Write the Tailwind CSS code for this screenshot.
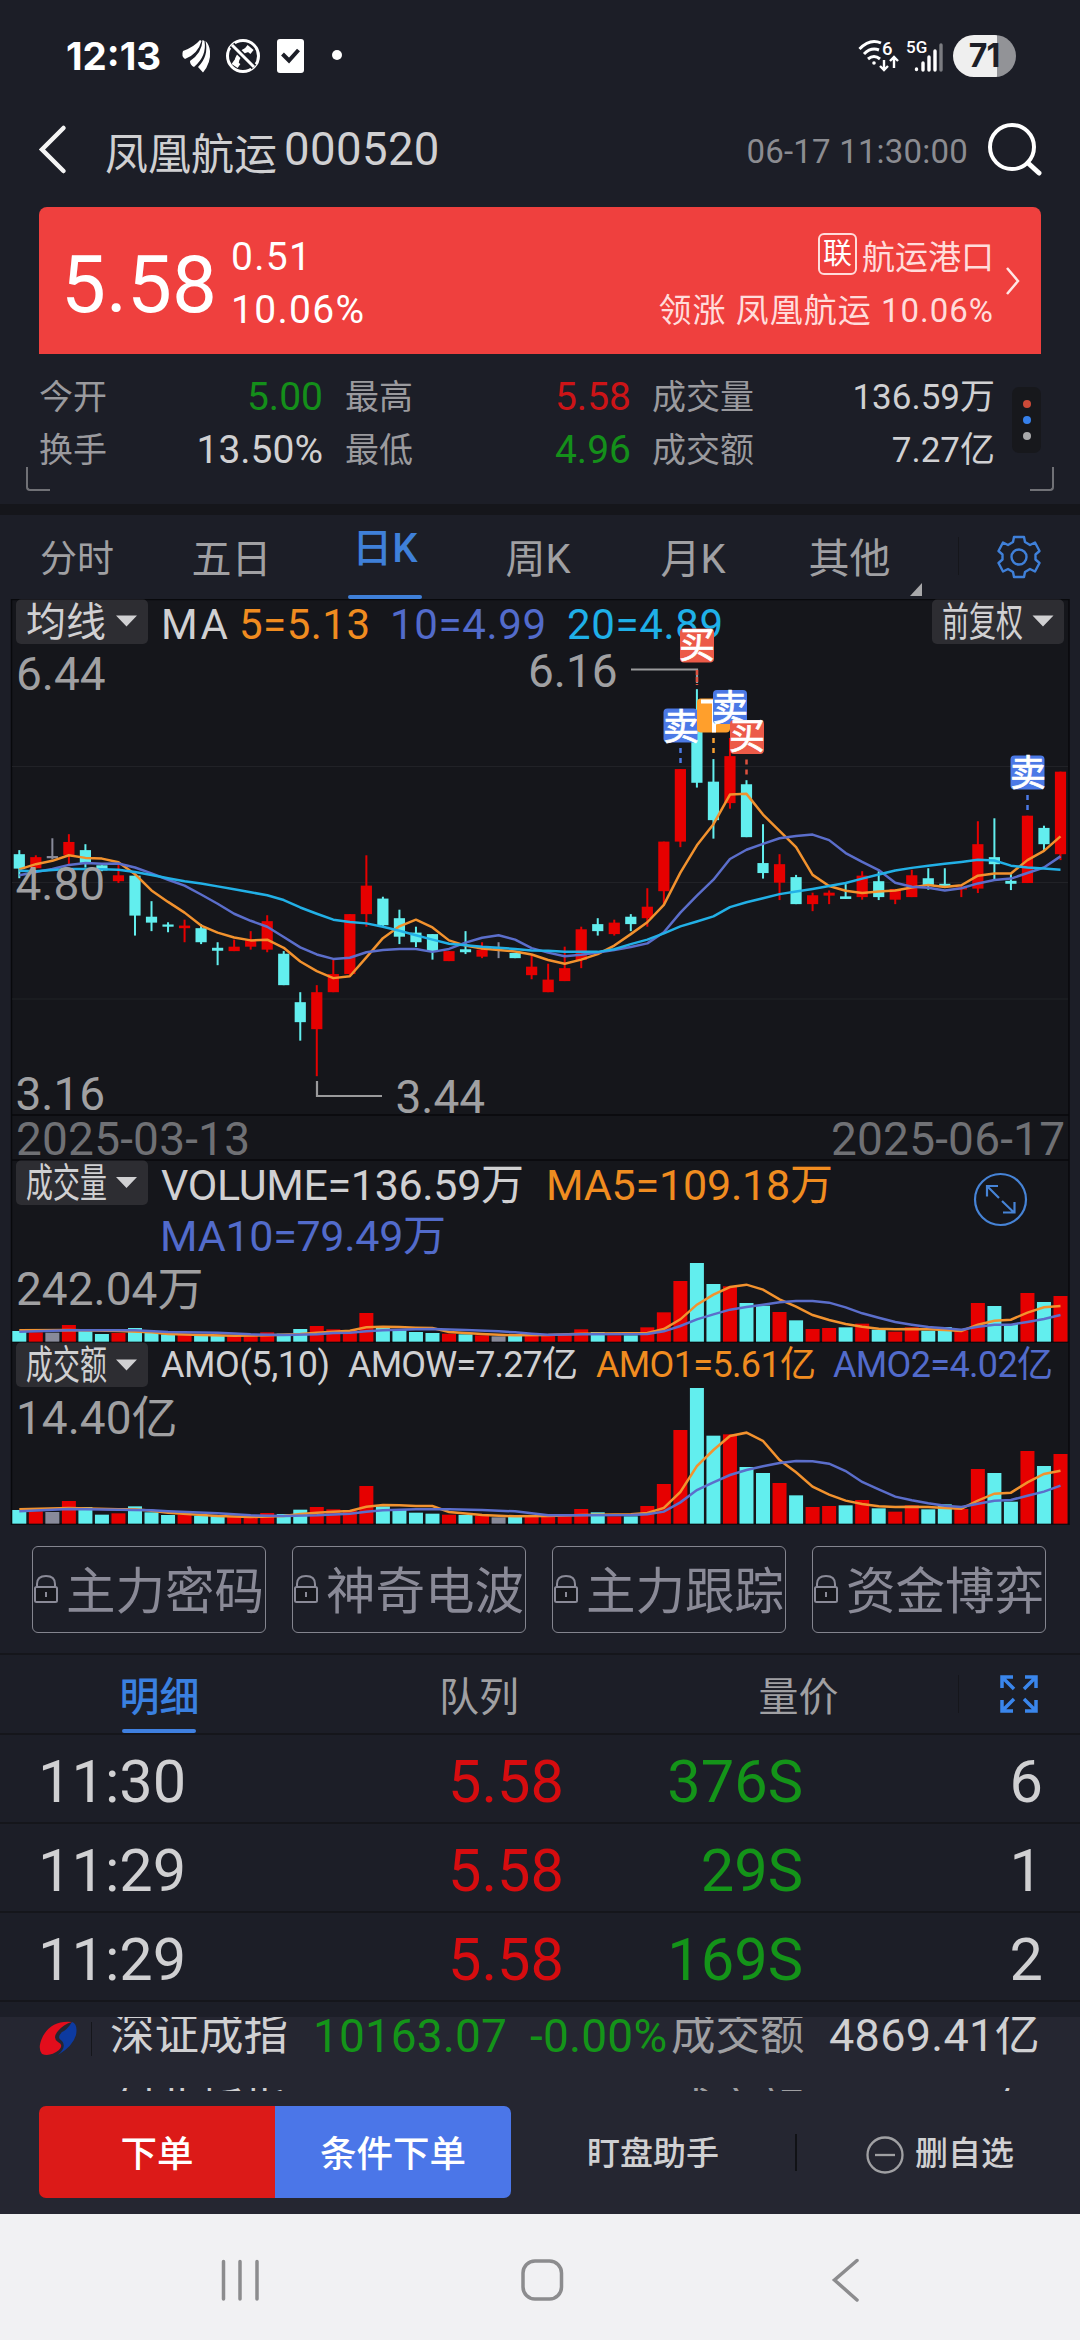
<!DOCTYPE html>
<html lang="zh-CN">

<head>
    <meta charset="UTF-8">
    <meta name="viewport" content="width=device-width, initial-scale=1.0">
    <script src="https://cdn.jsdelivr.net/npm/@tailwindcss/browser@4"></script>
    <title>凤凰航运 000520</title>
</head>

<body class="w-[1080px] h-[2340px] overflow-hidden bg-[#1c1e27] text-[#d0d0d2] font-['Roboto','Noto_Sans_CJK_SC',sans-serif] whitespace-nowrap">

    <!-- Status bar -->
    <div class="h-[110px] flex items-center pt-[2px] pl-[66px] pr-[64px] text-white">
        <span class="w-[115px] text-[38.5px] font-bold leading-none font-['Inter',sans-serif]">12:13</span>
        <svg class="w-[30px] h-[34px] shrink-0" viewBox="0 0 30 34" fill="#fff">
            <path d="M19 1 Q13 8 2 12 Q0 17 4 20 Q17 15 20.500 2 Z" />
            <path d="M21.500 1 Q21 14 9 22 Q9 26 13 28 Q26 17 23.500 2 Z" />
            <path d="M24.500 2 Q28 17 17 28 L22 33.500 Q30 24 29 12 Q28 5 24.500 2 Z" />
        </svg>
        <svg class="w-[36px] h-[36px] ml-[14px] shrink-0" viewBox="0 0 36 36" fill="none" stroke="#fff" stroke-width="3">
            <circle cx="18" cy="18" r="15.500" />
            <path d="M11 27 Q12 14 25 11" stroke-width="4.500" />
            <path d="M8 24 L14 28 M21 9 L27 14" stroke-width="5" />
            <path d="M7 7 L29 29" stroke="#1c1e27" stroke-width="6.500" />
            <path d="M7 7 L29 29" />
        </svg>
        <svg class="w-[27px] h-[34px] ml-[16px] shrink-0" viewBox="0 0 27 34">
            <rect width="27" height="34" rx="3" fill="#fff" />
            <path d="M5.500 15 L12 21.500 L21.500 11" fill="none" stroke="#1c1e27" stroke-width="4" />
        </svg>
        <span class="w-[10px] h-[10px] ml-[28px] mt-[-2px] rounded-full bg-white"></span>
        <svg class="w-[86px] h-[36px] mt-[-2px] ml-auto shrink-0" viewBox="0 -2 86 36" fill="none" stroke="#fff" stroke-width="3">
            <path d="M1.500 10 Q12 -1 23 4" />
            <path d="M6 15 Q13 8 21 11" />
            <path d="M10 20 Q16 15 22 20" />
            <circle cx="16" cy="24" r="1.800" fill="#fff" stroke="none" />
            <path d="M26 21 V30 M22 27 L26 31 L30 27 M36 29 V19 M32 22 L36 18 L40 22" stroke-width="2.400" />
            <text x="24" y="15.500" font-size="18.500" font-weight="500" fill="#fff" stroke="none">6</text>
            <text x="48" y="13.500" font-size="17" font-weight="500" fill="#fff" stroke="none">5G</text>
            <path d="M58.500 30.500 V30 M65 31 V24 M71 31 V18 M77 31 V12" stroke-width="3.400" stroke-linecap="round" />
            <path d="M83 31 V6" stroke="#7b7c81" stroke-width="3.400" stroke-linecap="round" />
        </svg>
        <div class="w-[63px] h-[42px] ml-[9px] rounded-full overflow-hidden flex items-center justify-center bg-[linear-gradient(90deg,#efefef_70%,#929397_70%)] text-[#1c1e27] text-[32px] font-bold leading-none font-['Inter',sans-serif] pr-[1px] tracking-[-1px]">71</div>
    </div>

    <!-- Title -->
    <header class="h-[97px] flex items-start pl-[38px] pr-[38px]">
        <svg class="w-[30px] h-[52px] mt-[14px] shrink-0" viewBox="0 0 30 52" fill="none" stroke="#f4f4f4" stroke-width="4.500" stroke-linecap="round">
            <path d="M25.500 4 L4 25.500 L25.500 47" />
        </svg>
        <span class="ml-[37px] mt-[23px] text-[43px] leading-[44px]">凤凰航运</span>
        <span class="ml-[7px] mt-[18px] text-[45.5px] leading-[44px] tracking-[0.4px]">000520</span>
        <span class="ml-auto mr-[20px] mt-[20px] text-[33px] leading-[44px] tracking-[0.2px] text-[#8b8c91]">06-17 11:30:00</span>
        <svg class="w-[54px] h-[56px] mt-[12px] shrink-0" viewBox="0 0 54 56" fill="none" stroke="#fff" stroke-width="4" stroke-linecap="round">
            <circle cx="24" cy="25" r="22" />
            <path d="M40 41 L51 51" stroke-width="5" />
        </svg>
    </header>

    <!-- Price card -->
    <section class="mx-[39px] h-[147px] rounded-t-[8px] bg-[#ef403e] text-white flex items-center">
        <span class="ml-[22px] mt-[8px] w-[170px] text-[80px] leading-none">5.58</span>
        <div class="mt-[6px] text-[39px] leading-[53px]">
            <p class="tracking-[1.3px]">0.51</p>
            <p class="tracking-[1.3px]">10.06%</p>
        </div>
        <div class="ml-auto mt-[6px] text-right text-[33px] leading-[53px] text-[#ffdcdb]">
            <p class="flex items-center justify-end gap-[5px]"><span class="w-[39px] h-[42px] mt-[-6px] rounded-[6px] border-2 border-[#ffdcdb] text-[29px] leading-[38px] text-center text-white flex justify-center">联</span><span>航运港口</span></p>
            <p class="tracking-[1px]">领涨 凤凰航运 10.06%</p>
        </div>
        <svg class="w-[16px] h-[30px] ml-[11px] mr-[20px] shrink-0" viewBox="0 0 16 30" fill="none" stroke="#ffe6e5" stroke-width="2.500">
            <path d="M2 2 L13 15 L2 28" />
        </svg>
    </section>

    <!-- Quote summary -->
    <section class="relative h-[150px] pt-[17px] pl-[39px]">
        <div class="grid grid-cols-[120px_164px_120px_188px_150px_214px] items-center leading-[53px] text-[34px] text-[#9a9a9e]">
            <span>今开</span><span class="text-right text-[39px] text-[#148f1a]">5.00</span>
            <span class="pl-[22px]">最高</span><span class="text-right text-[39px] text-[#cc1417]">5.58</span>
            <span class="pl-[21px]">成交量</span><span class="text-right text-[35px] text-[#d0d0d2]">136.59万</span>
            <span>换手</span><span class="text-right text-[39px] text-[#d0d0d2]">13.50%</span>
            <span class="pl-[22px]">最低</span><span class="text-right text-[39px] text-[#148f1a]">4.96</span>
            <span class="pl-[21px]">成交额</span><span class="text-right text-[35px] text-[#d0d0d2]">7.27亿</span>
        </div>
        <div class="absolute left-[1012px] top-[33px] w-[29px] h-[66px] rounded-[7px] bg-[#17181c] flex flex-col items-center justify-center gap-[8px]">
            <span class="w-[8px] h-[8px] rounded-full bg-[#cc4a38]"></span>
            <span class="w-[8px] h-[8px] rounded-full bg-[#3680ea]"></span>
            <span class="w-[8px] h-[8px] rounded-full bg-[#a9a9ab]"></span>
        </div>
        <span class="absolute left-[26px] bottom-[13px] w-[24px] h-[24px] border-l-2 border-b-2 border-[#707176] rounded-bl-[4px]"></span>
        <span class="absolute right-[26px] bottom-[13px] w-[24px] h-[24px] border-r-2 border-b-2 border-[#707176] rounded-br-[4px]"></span>
    </section>

    <!-- Period tabs -->
    <nav class="relative h-[95px] border-t-[11px] border-[#15161b] text-[#a0a0a3]">
        <div class="grid grid-cols-[154px_155px_152px_154px_156px_157px_30px_122px] grid-rows-[84px] h-[84px] leading-[89px] text-center text-[40px]">
            <span class="text-[37px]">分时</span>
            <span>五日</span>
            <span class="relative text-[#3f80d9] font-medium leading-[68px]">日K<i class="absolute left-[39px] bottom-0 w-[74px] h-[4px] rounded-full bg-[#3f80d9]"></i></span>
            <span>周K</span>
            <span>月K</span>
            <span class="text-[41px]">其他</span>
            <span></span>
            <span class="relative flex justify-center items-center">
                <i class="absolute left-0 top-[22px] w-px h-[38px] bg-[#15161b]"></i>
                <svg class="w-[44px] h-[44px]" viewBox="-22 -22 44 44" fill="none" stroke="#3f80d9" stroke-width="2.400" stroke-linejoin="round">
                    <path d="M-5 -20 H5 L6 -15 L11 -12 L16 -14.500 L20.500 -6 L16.500 -2.500 V2.500 L20.500 6 L16 14.500 L11 12 L6 15 L5 20 H-5 L-6 15 L-11 12 L-16 14.500 L-20.500 6 L-16.500 2.500 V-2.500 L-20.500 -6 L-16 -14.500 L-11 -12 L-6 -15 Z" />
                    <circle r="7.500" />
                </svg>
            </span>
        </div>
        <svg class="absolute left-[910px] bottom-[3px] w-[12px] h-[13px]" viewBox="0 0 12 13"><path d="M0 13 L12 0 V13 Z" fill="#a8a8aa" /></svg>
    </nav>

    <!-- Charts -->
    <svg class="block w-[1080px] h-[926px]" viewBox="0 599 1080 926" fill="none">
        <rect x="11.500" y="599" width="1057.500" height="925" fill="#15161b" />
        <path d="M11.500 599.500 H1069 M11.500 1115 H1069 M11.500 1160 H1069 M11.500 1342 H1069 M11.500 1524 H1069 M11.500 599 V1525 M1069 599 V1525" stroke="#08090c" stroke-width="1.500" />
        <path d="M12 766.500 H1068 M12 882.500 H1068 M12 999 H1068" stroke="#212227" stroke-width="1.200" />

        <!-- indicator legends -->
        <g font-size="42">
            <text x="161" y="638.500" fill="#d0d0d2" textLength="67">MA</text>
            <text x="239" y="638.500" fill="#f08c20" textLength="131">5=5.13</text>
            <text x="390" y="638.500" fill="#526bcb" textLength="156">10=4.99</text>
            <text x="567" y="638.500" fill="#1fb0e8" textLength="156">20=4.89</text>
        </g>
        <g id="candles"></g>
        <g id="kLines" stroke-width="2.500" stroke-linejoin="round"></g>
        <g font-size="46" fill="#a0a0a2">
            <text x="16" y="689.500">6.44</text>
            <text x="15.500" y="899.500">4.80</text>
            <text x="15.500" y="1110">3.16</text>
            <text x="528" y="687">6.16</text>
            <text x="395.500" y="1113">3.44</text>
            <text x="16" y="1305">242.04万</text>
            <text x="16" y="1434">14.40亿</text>
            <text x="16" y="1154.500" fill="#6f7074" textLength="234">2025-03-13</text>
            <text x="831" y="1154.500" fill="#6f7074" textLength="234">2025-06-17</text>
        </g>
        <path d="M631 669.500 H697 V683 M317 1081 V1096 H382" stroke="#9a9a9c" stroke-width="2.200" />

        <g font-size="43">
            <text x="161" y="1200" fill="#d0d0d2" textLength="363">VOLUME=136.59万</text>
            <text x="546" y="1200" fill="#f08c20" textLength="287">MA5=109.18万</text>
            <text x="160" y="1251" fill="#526bcb" textLength="286">MA10=79.49万</text>
        </g>
        <g font-size="36">
            <text x="161" y="1377" fill="#d0d0d2" textLength="169">AMO(5,10)</text>
            <text x="348" y="1377" fill="#d0d0d2" textLength="230">AMOW=7.27亿</text>
            <text x="596" y="1377" fill="#f08c20" textLength="220">AMO1=5.61亿</text>
            <text x="833" y="1377" fill="#526bcb" textLength="220">AMO2=4.02亿</text>
        </g>

        <!-- dropdown chips -->
        <g fill="#2d2d32">
            <rect x="16" y="599.500" width="132" height="44.500" rx="5" />
            <rect x="932" y="599.500" width="132" height="44.500" rx="5" />
            <rect x="16" y="1160.500" width="132" height="44.500" rx="5" />
            <rect x="16" y="1342.500" width="132" height="44.500" rx="5" />
        </g>
        <g font-size="40" fill="#d0d0d2">
            <text x="26" y="636">均线</text>
            <text x="942" y="636" textLength="81" lengthAdjust="spacingAndGlyphs">前复权</text>
            <text x="26" y="1197" textLength="81" lengthAdjust="spacingAndGlyphs">成交量</text>
            <text x="26" y="1379" textLength="81" lengthAdjust="spacingAndGlyphs">成交额</text>
            <path d="M116 615.500 H137 L126.500 626.500 Z M1032.500 615.500 H1053.500 L1043 626.500 Z M116 1177 H137 L126.500 1188 Z M116 1359.500 H137 L126.500 1370.500 Z" />
        </g>

        <!-- trade marks -->
        <g font-size="36" fill="#fff" text-anchor="middle" stroke-width="2.500">
            <path d="M697 670 V685" stroke="#e0523f" stroke-dasharray="5 2" />
            <path d="M680.500 748 V764" stroke="#4b79e6" stroke-dasharray="5 5" />
            <path d="M713.500 738 V754" stroke="#f9a030" stroke-dasharray="5 5" />
            <path d="M746.500 759.500 V776" stroke="#e0523f" stroke-dasharray="5 5" />
            <path d="M1027.500 795 V812" stroke="#4b79e6" stroke-dasharray="5 5" />
            <rect x="680" y="628.500" width="34" height="34" rx="4" fill="#ec5a48" />
            <text x="697" y="657.500" stroke="#fff" stroke-width="0.700">买</text>
            <rect x="663.500" y="708.500" width="34" height="34" rx="4" fill="#4b79e6" />
            <text x="681" y="740" stroke="#fff" stroke-width="0.700">卖</text>
            <rect x="697" y="698.500" width="33" height="34" rx="4" fill="#ff9f2c" />
            <path d="M701 701.500 H727 M714 701 V732.500" stroke="#fff" stroke-width="4" />
            <rect x="713" y="690" width="34" height="34" rx="4" fill="#4b79e6" />
            <text x="730" y="721" stroke="#fff" stroke-width="0.700">卖</text>
            <rect x="730" y="720" width="34" height="34" rx="4" fill="#ec5a48" />
            <text x="747" y="748.500" stroke="#fff" stroke-width="0.700">买</text>
            <rect x="1010.500" y="755.500" width="34" height="34" rx="4" fill="#4b79e6" />
            <text x="1028" y="786" stroke="#fff" stroke-width="0.700">卖</text>
        </g>

        <g id="volume" stroke-width="2.500"></g>
        <g id="amount" stroke-width="2.500"></g>

        <!-- expand button -->
        <g stroke="#4683d6" stroke-width="2.200">
            <circle cx="1000.500" cy="1199.500" r="25.500" />
            <path d="M999 1198 L987 1186 M987 1196.500 V1186 H998 M1002 1201 L1014 1212.500 M1014.500 1202 V1212.500 H1003" />
        </g>
    </svg>

    <!-- Locked indicators -->
    <section id="locked" class="h-[130px] pt-[21px] pl-[32px] grid grid-cols-[234px_234px_234px_234px] gap-[26px] items-start border-b-2 border-[#15161b]"></section>

    <!-- Detail tabs -->
    <nav class="h-[80px] border-b-2 border-[#15161b] grid grid-cols-[319px_320px_319px_122px] grid-rows-[78px] text-center text-[40px] leading-[85px] text-[#a0a0a3]">
        <span class="relative text-[#3a80e0] font-medium">明细<i class="absolute left-[122px] bottom-0 w-[74px] h-[4px] rounded-full bg-[#3f80e0]"></i></span>
        <span>队列</span>
        <span>量价</span>
        <span class="relative flex justify-center items-center">
            <i class="absolute left-0 top-[20px] w-px h-[38px] bg-[#15161b]"></i>
            <svg class="w-[38px] h-[38px]" viewBox="0 0 38 38" fill="none" stroke="#3a86ec" stroke-width="3.500">
                <path d="M2 13 V2 H13 M2 2 L14 14 M25 2 H36 V13 M36 2 L24 14 M2 25 V36 H13 M2 36 L14 24 M36 25 V36 H25 M36 36 L24 24" />
            </svg>
        </span>
    </nav>

    <!-- Tick list -->
    <section id="ticks" class="h-[282px]"></section>

    <!-- Index ticker -->
    <section class="h-[74px] overflow-hidden bg-[#252631] text-[45px]">
        <div class="h-[74px] flex items-start leading-[66px] pl-[38px]">
            <svg class="w-[40px] h-[36px] mt-[4px] shrink-0" viewBox="0 0 40 36">
                <path d="M34 1 Q14 -1 5 15 Q-1 27 4 33 Q12 36 21 29 Q26 24 20 21 Q14 17 20 10 Q26 3 34 1 Z" fill="#e30d1c" />
                <path d="M34 1 Q40 3 38 14 Q35 25 20 34 Q29 26 24 20 Q18 17 24 11 Q29 9 34 1 Z" fill="#0d3aa0" />
            </svg>
            <span class="ml-[13px] mt-[5px] w-px h-[34px] bg-[#15161b]"></span>
            <span class="ml-[18px] mt-[-15px] text-[44.5px] w-[203px]">深证成指</span>
            <span class="mt-[-14px] w-[217px] text-[#149419] text-[46px] tracking-[0.1px]">10163.07</span>
            <span class="mt-[-14px] w-[141px] text-[#149419] text-[46px] tracking-[0.2px]">-0.00%</span>
            <span class="mt-[-15px] w-[158px] text-[#a0a0a3] text-[44.500px]">成交额</span>
            <span class="mt-[-14px] tracking-[0.3px]">4869.41亿</span>
        </div>
    </section>
    <!-- next row, just coming into view -->
    <section class="h-[3px] mt-[-3px] overflow-hidden bg-[#252631] flex items-start leading-[66px] text-[44.500px]">
        <span class="ml-[110px] mt-[-11px] w-[560px]">创业板指</span>
        <span class="mt-[-11px] w-[324px] text-[#a0a0a3]">成交额</span>
        <span class="mt-[-11px]">亿</span>
    </section>

    <!-- Order bar -->
    <footer class="h-[123px] bg-[#252631] flex items-start pt-[15px] pl-[39px] text-[33px] leading-[96px] font-medium">
        <button class="w-[236px] h-[92px] rounded-l-[7px] bg-[#dc1a18] text-white text-[36.5px] leading-[92px] pt-[3px]">下单</button>
        <button class="w-[236px] h-[92px] rounded-r-[7px] bg-[#4b76e8] text-white text-[36.5px] leading-[92px] pt-[3px]">条件下单</button>
        <span class="w-[284px] text-center">盯盘助手</span>
        <i class="mt-[28px] w-[2px] h-[37px] bg-[#111216]"></i>
        <svg class="w-[38px] h-[38px] mt-[30px] ml-[69px] shrink-0" viewBox="0 0 38 38" fill="none" stroke="#a0a0a3" stroke-width="2.300">
            <circle cx="19" cy="19" r="17.500" />
            <path d="M9 19 H29" />
        </svg>
        <span class="ml-[11px]">删自选</span>
    </footer>

    <!-- System navigation -->
    <div class="h-[126px] bg-[#f1f1f3] pt-[44px]">
        <svg class="block w-[1080px] h-[44px]" viewBox="0 2258 1080 44" fill="none" stroke="#8c8c8e" stroke-width="3.500" stroke-linecap="round">
            <path d="M223.500 2261.500 V2299 M240 2261.500 V2299 M257 2261.500 V2299" />
            <rect x="523" y="2261" width="38.500" height="38" rx="12" />
            <path d="M857 2260.500 L834.500 2280 L857 2300" />
        </svg>
    </div>

    <script>
        const RED = "#e60000", CYAN = "#62eeee", GREY = "#888a9a";
        const STEP = 16.527;
        const cx = i => 19.3 + i * STEP;
        const kY = v => 590 + v * 0.37;
        const vY = v => 1150 + v / 3;

        // colour, high, body top, body bottom, low
        const candles = `c 703 714 753 779|r 717 722 752 752|g 671 719 725 728|r 660 681 716 742|c 687 703 738 750|c 744 744 758 760|r 738 771 787 792|c 772 772 880 934|c 841 883 899 922|c 898 904 910 925|r 891 907 914 952|c 903 914 952 957|c 952 967 975 1014|r 945 964 976 976|r 922 947 964 972|r 879 895 972 979|c 976 983 1068 1068|c 1087 1114 1168 1218|r 1068 1087 1187 1314|r 1000 1038 1087 1087|r 876 876 1038 1044|r 717 799 876 910|c 829 834 906 908|c 864 887 937 957|c 910 926 952 965|c 930 930 976 999|r 976 976 1003 1003|c 922 971 979 984|r 952 972 991 995|g 952 965 969 995|c 981 981 995 995|r 985 1018 1041 1052|r 1010 1053 1087 1087|r 964 1022 1057 1057|r 910 917 1000 1022|c 887 903 922 934|r 891 899 930 934|c 876 883 903 922|r 806 856 887 910|r 680 680 814 850|r 484 484 680 695|c 268 380 521 534|c 457 518 622 672|r 400 449 576 591|c 514 525 668 668|c 633 738 765 780|r 714 741 791 838|c 770 776 849 849|r 818 825 849 868|r 812 818 826 849|c 795 828 835 835|r 760 772 830 837|c 760 787 830 838|r 808 808 837 849|r 756 771 830 830|c 752 779 797 810|c 752 794 800 800|r 800 804 808 830|r 625 687 807 819|c 617 722 741 783|c 768 786 794 811|r 610 610 792 792|c 637 643 687 705|r 491 491 714 730`
            .split("|").map(s => s.split(" "));

        const ma5 = [755, 741, 732, 717, 724, 726, 736, 768, 812, 843, 872, 907, 926, 939, 947, 945, 967, 1004, 1030, 1049, 1044, 993, 941, 909, 891, 912, 947, 961, 969, 973, 977, 985, 1000, 1010, 999, 984, 961, 930, 898, 851, 764, 690, 633, 553, 551, 607, 651, 695, 770, 800, 813, 819, 815, 812, 804, 797, 803, 798, 772, 766, 766, 730, 705, 666];
        const ma10 = [771, 762, 754, 743, 738, 740, 739, 750, 766, 783, 799, 823, 848, 875, 894, 910, 938, 966, 985, 997, 994, 979, 973, 970, 970, 978, 970, 953, 940, 933, 945, 968, 980, 990, 986, 980, 973, 965, 955, 925, 872, 826, 783, 727, 702, 686, 671, 665, 661, 676, 711, 735, 757, 791, 802, 805, 812, 806, 793, 784, 780, 765, 750, 720];
        const ma20 = [759, 760, 757, 754, 754, 755, 756, 762, 770, 779, 787, 793, 801, 809, 817, 825, 838, 858, 875, 891, 897, 901, 910, 921, 933, 945, 956, 960, 964, 967, 970, 974, 975, 978, 978, 978, 971, 957, 945, 928, 909, 896, 882, 857, 844, 833, 822, 815, 808, 800, 792, 780, 769, 758, 751, 745, 740, 735, 729, 731, 745, 750, 753, 756];

        const vol = [543, 547, 548, 525, 541, 552, 549, 534, 549, 553, 551, 555, 556, 557, 556, 547, 551, 537, 528, 538, 540, 489, 534, 541, 546, 549, 551, 553, 556, 559, 557, 556, 557, 556, 538, 546, 556, 556, 532, 487, 393, 339, 402, 409, 459, 467, 486, 511, 537, 534, 532, 521, 539, 545, 532, 542, 531, 541, 459, 468, 522, 429, 456, 438];
        const amo = [1080, 1084, 1086, 1053, 1071, 1094, 1090, 1069, 1087, 1095, 1094, 1097, 1098, 1100, 1099, 1089, 1092, 1079, 1071, 1078, 1082, 1008, 1069, 1080, 1088, 1091, 1094, 1095, 1098, 1102, 1100, 1099, 1100, 1099, 1077, 1087, 1099, 1099, 1068, 1002, 840, 714, 857, 853, 951, 969, 999, 1036, 1071, 1068, 1066, 1050, 1075, 1085, 1066, 1078, 1063, 1077, 957, 969, 1055, 903, 948, 912];

        // index value pairs
        const vol5 = "0 541,3 540,6 543,8 547,9 552,11 555,13 557,15 556,16 554,17 552,18 548,19 545,20 542,21 532,22 530,23 531,24 533,25 534,26 546,27 549,28 552,30 556,32 555,34 551,38 549,39 537,40 508,41 464,42 434,43 411,44 404,45 419,46 448,47 470,48 495,49 510,50 522,51 530,52 536,53 538,54 537,55 538,56 540,57 543,58 524,59 512,60 509,61 488,62 472,63 468";
        const vol10 = "0 545,3 541,7 541,9 546,12 548,14 553,16 555,18 553,19 549,20 548,21 544,22 541,23 539,24 538,25 537,27 540,29 544,30 547,31 551,32 554,34 553,38 552,39 544,40 528,41 508,42 493,43 479,44 471,45 464,46 457,47 453,48 453,49 458,50 472,51 490,52 503,53 516,54 524,55 531,56 535,57 539,58 530,59 524,60 524,61 516,62 507,63 495";
        const amo5 = "0 1078,3 1074,6 1078,7 1078,8 1082,9 1088,12 1098,14 1101,16 1098,17 1092,18 1088,19 1085,20 1083,21 1070,22 1065,23 1066,24 1068,25 1068,26 1086,28 1095,30 1099,32 1098,34 1095,37 1093,38 1089,39 1074,40 1026,41 948,42 900,43 858,44 848,45 873,46 930,47 967,48 1010,49 1034,50 1052,51 1062,52 1069,53 1071,54 1070,55 1071,56 1074,57 1076,58 1052,59 1031,60 1028,61 997,62 972,63 962";
        const amo10 = "0 1084,3 1077,6 1079,8 1081,9 1084,12 1090,14 1096,16 1098,18 1096,20 1091,21 1085,22 1081,24 1078,26 1078,28 1080,30 1084,31 1090,32 1096,34 1096,37 1095,38 1093,39 1085,40 1057,41 1020,42 997,43 975,44 960,45 949,46 939,47 933,48 934,49 941,50 963,51 996,52 1018,53 1040,54 1051,55 1060,56 1067,57 1071,58 1061,59 1052,60 1050,61 1037,62 1025,63 1007";

        const colorOf = c => c === "r" ? RED : c === "c" ? CYAN : GREY;

        document.getElementById("candles").innerHTML = candles.map(([c, hi, top, bot, lo], i) => {
            const x = cx(i), f = colorOf(c);
            return `<rect x="${x - 1}" y="${kY(+hi)}" width="2" height="${(lo - hi) * 0.37}" fill="${f}"/>` +
                `<rect x="${x - 5.6}" y="${kY(+top)}" width="11.2" height="${Math.max(2, (bot - top) * 0.37)}" fill="${f}"/>`;
        }).join("");

        const line = (pts, y, color) =>
            `<polyline fill="none" stroke="${color}" points="${pts.map(([i, v]) => cx(+i) + "," + y(+v)).join(" ")}"/>`;
        const pairs = s => s.split(",").map(p => p.split(" "));

        document.getElementById("kLines").innerHTML =
            line(ma5.map((v, i) => [i, v]), kY, "#f2922e") +
            line(ma10.map((v, i) => [i, v]), kY, "#5b6ecb") +
            line(ma20.map((v, i) => [i, v]), kY, "#22b0e6");

        function bars(data, base) {
            return data.map((v, i) =>
                `<rect x="${cx(i) - 7}" y="${vY(v)}" width="14" height="${(base - v) / 3}" fill="${colorOf(candles[i][0])}"/>`
            ).join("");
        }
        document.getElementById("volume").innerHTML = bars(vol, 575) + line(pairs(vol5), vY, "#f2922e") + line(pairs(vol10), vY, "#5b6ecb");
        document.getElementById("amount").innerHTML = bars(amo, 1121) + line(pairs(amo5), vY, "#f2922e") + line(pairs(amo10), vY, "#5b6ecb");

        // Locked indicator buttons
        document.getElementById("locked").innerHTML = ["主力密码", "神奇电波", "主力跟踪", "资金博弈"].map(name => `
            <button class="h-[87px] flex items-center border-[1.5px] border-[#84858f] rounded-[6px] text-[49.5px] leading-[84px] text-[#8a8a97]">
                <svg class="w-[26px] h-[32px] mr-[7px] shrink-0" viewBox="0 0 26 32" fill="none" stroke="#8a8a97" stroke-width="2">
                    <path d="M4 13 V10 Q4 2 13 2 Q22 2 22 10 V13" />
                    <rect x="2" y="13" width="22" height="15" rx="1.500" fill="#15161b" />
                    <path d="M13 18 V23" />
                </svg><span class="pt-[5px]">${name}</span></button>`).join("");

        // Tick rows
        document.getElementById("ticks").innerHTML = [
            ["11:30", "5.58", "376S", "6"],
            ["11:29", "5.58", "29S", "1"],
            ["11:29", "5.58", "169S", "2"]
        ].map(([t, p, v, n]) => `
            <div class="h-[89px] border-b-2 border-[#15161b] grid grid-cols-[300px_226px_239px_240px] pl-[38px] text-[59.5px] leading-[94px] text-right">
                <span class="text-left">${t}</span>
                <span class="text-[#d60c0f]">${p}</span>
                <span class="text-[#149419]">${v}</span>
                <span>${n}</span>
            </div>`).join("");
    </script>
</body>

</html>
